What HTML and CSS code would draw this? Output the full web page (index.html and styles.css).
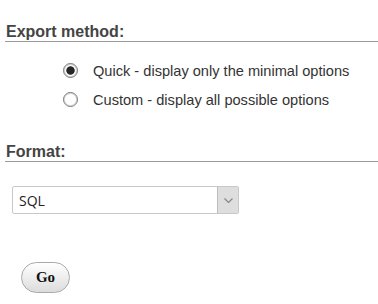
FILE: index.html
```html
<!DOCTYPE html>
<html lang="en">

<head>
    <meta charset="UTF-8" />
    <title>Export</title>
    <meta name="viewport" content="width=device-width, initial-scale=1.0" />
    <link rel="stylesheet" href="styles.css">
</head>

<body>
    <form class="export-form">
        <h3 class="section-title">Export method:</h3>
        <ul class="method-list">
            <li>
                <label class="method">
                    <input type="radio" name="method" value="quick" checked />
                    <span>Quick - display only the minimal options</span>
                </label>
            </li>
            <li>
                <label class="method">
                    <input type="radio" name="method" value="custom" />
                    <span>Custom - display all possible options</span>
                </label>
            </li>
        </ul>

        <h3 class="section-title format-title">Format:</h3>
        <div class="select-wrap">
            <select name="format">
                <option>SQL</option>
                <option>CSV</option>
                <option>JSON</option>
            </select>
            <span class="select-arrow">
                <svg width="9" height="5" viewBox="0 0 9 5">
                    <path d="M0.5 0.5 L4.5 4.5 L8.5 0.5" fill="none" stroke="#888" stroke-width="1.2" />
                </svg>
            </span>
        </div>

        <div class="go-row">
            <button type="button" class="go-btn">Go</button>
        </div>
    </form>
</body>

</html>
```

FILE: styles.css
```css
* {
    box-sizing: border-box;
}

body {
    margin: 0;
    background: #fff;
    font-family: 'Liberation Sans', Arial, sans-serif;
    color: #333;
}

.export-form {
    padding: 0 0 0 5px;
}

.section-title {
    margin: 23px 0 0;
    padding: 0 0 0 1px;
    font-size: 16px;
    line-height: 18px;
    font-weight: bold;
    color: #444;
    border-bottom: 1px solid #999;
}

.method-list {
    list-style: none;
    margin: 14px 0 0;
    padding: 0 0 0 58px;
}

.method-list li {
    height: 29px;
    display: flex;
    align-items: center;
}

.method {
    display: flex;
    align-items: center;
    gap: 15px;
    font-size: 14.6px;
    color: #333;
}

.method input {
    appearance: none;
    -webkit-appearance: none;
    margin: 0;
    width: 15px;
    height: 15px;
    border: 1px solid #777;
    border-radius: 50%;
    background: #fff;
    box-shadow: inset 0 0 0 1px #d8d8d8;
}

.method input:checked {
    background: radial-gradient(circle, #262626 0, #262626 3.8px, #fff 4.6px);
    box-shadow: inset 0 0 0 1px #d0d0d0;
}

.format-title {
    margin-top: 29px;
}

.select-wrap {
    position: relative;
    width: 227px;
    height: 28px;
    margin: 24px 0 0 7px;
}

.select-wrap select {
    appearance: none;
    -webkit-appearance: none;
    width: 100%;
    height: 100%;
    margin: 0;
    padding: 0 0 0 6px;
    border: 1px solid #c8c8c8;
    border-radius: 2px;
    background: #fff;
    font-family: 'Open Sans', 'Noto Sans', sans-serif;
    font-size: 14px;
    color: #222;
}

.select-arrow {
    position: absolute;
    top: 1px;
    right: 1px;
    width: 21px;
    height: 26px;
    display: flex;
    align-items: center;
    justify-content: center;
    background: #dedede;
    border-left: 1px solid #bdbdbd;
    pointer-events: none;
}

.go-row {
    margin: 48px 0 0 16px;
}

.go-btn {
    width: 49px;
    height: 31px;
    padding: 0;
    border: 1px solid #a9a9a9;
    border-radius: 16px;
    background: linear-gradient(#ffffff, #dcdcdc);
    font-family: 'Liberation Serif', 'Times New Roman', serif;
    font-size: 15px;
    font-weight: bold;
    color: #111;
    cursor: pointer;
}
```
